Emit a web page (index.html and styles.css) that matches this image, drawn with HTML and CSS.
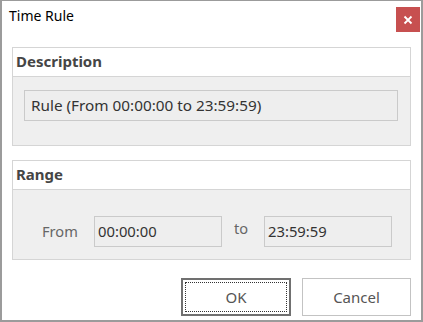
FILE: index.html
```html
<!DOCTYPE html>
<html>
<head>
<meta charset="utf-8">
<link rel="stylesheet" href="styles.css">
</head>
<body>
<div class="window">
  <div class="titlebar">
    <span class="title">Time Rule</span>
    <div class="close">
      <svg width="10" height="10" viewBox="0 0 10 10"><path d="M1.5 1.5 L8.5 8.5 M8.5 1.5 L1.5 8.5" stroke="#fff" stroke-width="1.8"/></svg>
    </div>
  </div>
  <div class="content">
    <div class="panel">
      <div class="panel-head">Description</div>
      <div class="panel-body desc-body">
        <div class="textbox wide">Rule (From 00:00:00 to 23:59:59)</div>
      </div>
    </div>
    <div class="panel range">
      <div class="panel-head">Range</div>
      <div class="panel-body range-body">
        <span class="label from">From</span>
        <div class="textbox small">00:00:00</div>
        <span class="label to">to</span>
        <div class="textbox small">23:59:59</div>
      </div>
    </div>
    <div class="buttons">
      <div class="btn ok"><span class="focus">OK</span></div>
      <div class="btn">Cancel</div>
    </div>
  </div>
</div>
</body>
</html>
```

FILE: styles.css
```css
html, body {
  margin: 0;
  padding: 0;
  background: #fff;
}
.window {
  width: 423px;
  height: 322px;
  box-sizing: border-box;
  border: 2px solid #9b9b9b;
  border-top-width: 1px;
  background: #fff;
  font-family: "Noto Sans", "Open Sans", sans-serif;
  display: flex;
  flex-direction: column;
}
.titlebar {
  height: 46px;
  display: flex;
  align-items: flex-start;
  justify-content: space-between;
  padding: 0 1px 0 7px;
}
.title {
  font-size: 14px;
  color: #000;
  margin-top: 5px;
}
.close {
  width: 24px;
  height: 25px;
  margin-top: 6px;
  background: #c75050;
  display: flex;
  align-items: center;
  justify-content: center;
}
.content {
  padding: 0 10px;
  display: flex;
  flex-direction: column;
}
.panel {
  border: 1px solid #d5d5d5;
  display: flex;
  flex-direction: column;
}
.panel.range {
  margin-top: 14px;
}
.panel-head {
  height: 28px;
  border-bottom: 1px solid #d5d5d5;
  background: #fff;
  font-weight: bold;
  font-size: 15px;
  color: #454545;
  padding-left: 3px;
  line-height: 27px;
}
.panel-body {
  background: #efefef;
}
.desc-body {
  height: 68px;
  box-sizing: border-box;
  padding: 13px 12px 0 11px;
}
.range-body {
  height: 69px;
  box-sizing: border-box;
  padding: 26px 0 0 29px;
  display: flex;
  align-items: flex-start;
}
.textbox {
  box-sizing: border-box;
  height: 31px;
  border: 1px solid #cacaca;
  background: #eeeeee;
  font-size: 15.3px;
  color: #333;
  line-height: 28px;
  padding-left: 6px;
  white-space: nowrap;
}
.textbox.small {
  width: 128px;
  padding-left: 3px;
  font-size: 14.8px;
}
.label {
  font-size: 14.6px;
  color: #666;
}
.label.from {
  width: 52px;
  line-height: 30px;
}
.label.to {
  width: 42px;
  padding-left: 12px;
  box-sizing: border-box;
  line-height: 24px;
}
.buttons {
  margin-top: 18px;
  display: flex;
  justify-content: flex-end;
  gap: 11px;
}
.btn {
  box-sizing: border-box;
  width: 109px;
  height: 38px;
  border: 1px solid #c3c3c3;
  background: #fff;
  font-size: 15px;
  color: #555;
  display: flex;
  align-items: center;
  justify-content: center;
}
.btn.ok {
  width: 110px;
  border: 2px solid #707070;
  padding: 2px;
}
.btn.ok .focus {
  flex: 1;
  align-self: stretch;
  border: 1px dotted #333;
  display: flex;
  align-items: center;
  justify-content: center;
}
```
